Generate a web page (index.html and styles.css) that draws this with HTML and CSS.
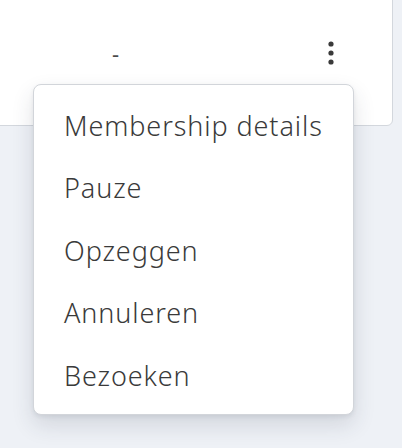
FILE: index.html
```html
<!DOCTYPE html>
<html>
<head>
<meta charset="utf-8">
<link rel="stylesheet" href="styles.css">
</head>
<body>
<div class="page">
  <div class="card">
    <div class="row">
      <span class="dash">-</span>
      <button class="kebab" aria-label="Meer">
        <svg width="8" height="26" viewBox="0 0 8 26"><circle cx="4" cy="4" r="2.6" fill="#3a3a3a"/><circle cx="4" cy="13" r="2.6" fill="#3a3a3a"/><circle cx="4" cy="22" r="2.6" fill="#3a3a3a"/></svg>
      </button>
    </div>
  </div>
  <ul class="menu">
    <li>Membership details</li>
    <li>Pauze</li>
    <li>Opzeggen</li>
    <li>Annuleren</li>
    <li>Bezoeken</li>
  </ul>
</div>
</body>
</html>
```
FILE: styles.css
```css
html, body {
  margin: 0;
  padding: 0;
}
body {
  background: #eef1f6;
  font-family: "Noto Sans", "Open Sans", sans-serif;
  width: 402px;
  height: 448px;
  overflow: hidden;
}
.page {
  position: relative;
  display: flow-root;
  width: 402px;
  height: 448px;
}
.card {
  margin-top: -10px;
  margin-left: -10px;
  width: 403px;
  height: 136px;
  box-sizing: border-box;
  background: #fff;
  border: 1px solid #d3d7dd;
  border-radius: 6px;
}
.row {
  display: flex;
  align-items: flex-start;
}
.dash {
  margin-left: 121px;
  margin-top: 51px;
  font-size: 22px;
  line-height: 22px;
  color: #4a4a4a;
}
.kebab {
  margin-left: auto;
  margin-right: 57px;
  margin-top: 49px;
  background: none;
  border: 0;
  padding: 0;
  display: flex;
}
.menu {
  position: absolute;
  left: 33px;
  top: 84px;
  width: 321px;
  height: 331px;
  box-sizing: border-box;
  margin: 0;
  padding: 9px 0 0 0;
  list-style: none;
  background: #fff;
  border: 1px solid #d2d5da;
  border-radius: 8px;
  box-shadow: 0 10px 22px rgba(40, 50, 70, 0.14), 0 2px 4px rgba(40,50,70,0.08);
}
.menu li {
  height: 62.5px;
  display: flex;
  align-items: center;
  padding-left: 30px;
  font-size: 27px;
  font-weight: 350;
  letter-spacing: 0.9px;
  color: #3a3a3a;
}
```
